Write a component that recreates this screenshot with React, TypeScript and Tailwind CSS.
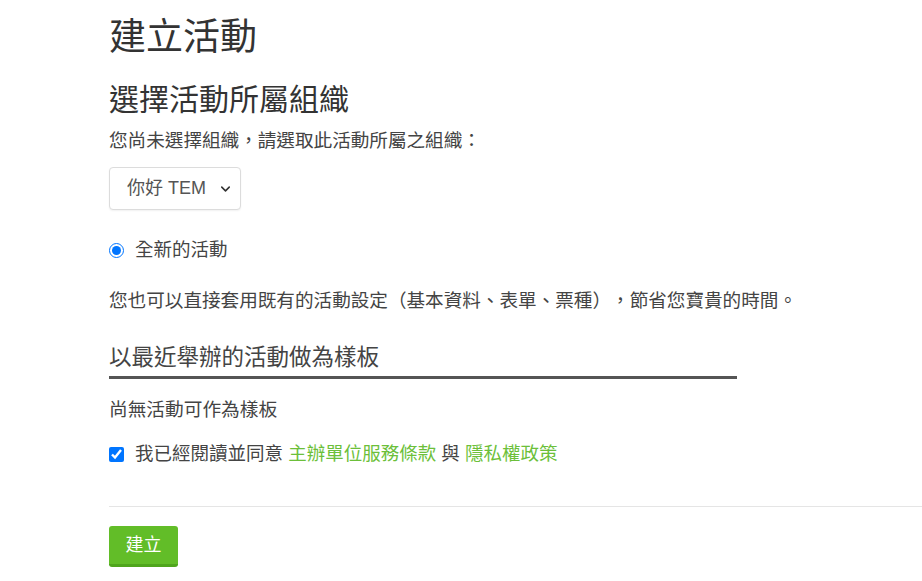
import { ChevronDown } from "lucide-react";

const font = { fontFamily: '"Liberation Sans", "Noto Sans CJK TC", sans-serif' };

export default function App() {
    return (
        <div className="min-h-screen bg-white text-[#333] [text-spacing-trim:space-all]" style={font}>
            <div className="pl-[109px] pt-[18px] pb-[15px]">
                {/* Page title */}
                <h1 className="text-[37px] leading-[40px] font-normal">建立活動</h1>

                {/* Organization */}
                <h2 className="mt-[24px] text-[30px] leading-[36px] font-normal">選擇活動所屬組織</h2>
                <p className="mt-[11px] text-[18.6px] leading-[24px] text-[#444]">您尚未選擇組織，請選取此活動所屬之組織：</p>

                <div className="relative mt-[14px] w-[132px] h-[43px]">
                    <select className="appearance-none w-full h-full rounded-[4px] border border-[#dcdcdc] bg-white pl-[17px] pr-8 text-[18px] text-[#555] shadow-[0_1px_2px_rgba(0,0,0,0.06)] focus:outline-none">
                        <option>你好 TEM</option>
                    </select>
                    <ChevronDown className="absolute right-[8px] top-1/2 -translate-y-1/2 text-[#333] pointer-events-none" size={15} strokeWidth={2.5} />
                </div>

                <label className="mt-[28px] flex items-center gap-[11px] h-[24px] text-[18.5px] text-[#444]">
                    <input type="radio" defaultChecked className="w-[15px] h-[15px] m-0" />
                    <span>全新的活動</span>
                </label>

                {/* Template */}
                <p className="mt-[27px] text-[18.6px] leading-[24px] text-[#444]">
                    您也可以直接套用既有的活動設定（基本資料、表單、票種），節省您寶貴的時間。
                </p>

                <h3 className="mt-[31px] w-[628px] pb-[4px] border-b-[3px] border-[#555] text-[22.5px] leading-[28px] font-normal text-[#444]">
                    以最近舉辦的活動做為樣板
                </h3>

                <p className="mt-[19px] text-[18.7px] leading-[24px] text-[#444]">尚無活動可作為樣板</p>

                <label className="mt-[20px] flex items-center gap-[11px] h-[24px] text-[18.5px] text-[#444]">
                    <input type="checkbox" defaultChecked className="w-[15px] h-[15px] m-0" />
                    <span>
                        我已經閱讀並同意 <a className="text-[#6cbf3a]">主辦單位服務條款</a> 與 <a className="text-[#6cbf3a]">隱私權政策</a>
                    </span>
                </label>

                <hr className="mt-[40px] border-0 border-t border-[#e5e5e5]" />

                <button className="mt-[19px] w-[69px] h-[41px] rounded-[3px] bg-[#62bd28] border-b-[3px] border-[#4fa51d] text-white text-[18px] leading-none">
                    建立
                </button>
            </div>
        </div>
    );
}
